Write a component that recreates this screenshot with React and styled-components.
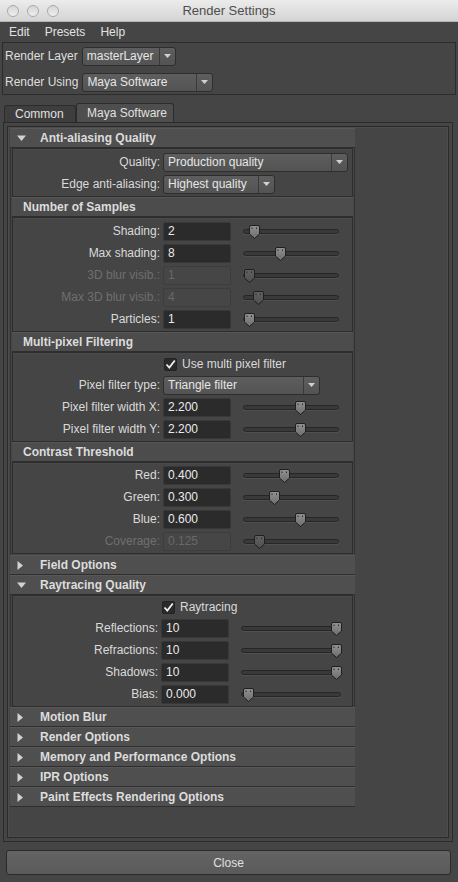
import React from "react";
import styled, { createGlobalStyle } from "styled-components";

const GlobalStyle = createGlobalStyle`
  * { box-sizing: border-box; }
  html, body {
    margin: 0;
    padding: 0;
    background: #454545;
  }
  body {
    font-family: "Liberation Sans", Arial, sans-serif;
    font-size: 12px;
    color: #d9d9d9;
  }
`;

const samples = [
  { label: "Shading:", value: "2", pos: 10 },
  { label: "Max shading:", value: "8", pos: 36 },
  { label: "3D blur visib.:", value: "1", pos: 5, disabled: true },
  { label: "Max 3D blur visib.:", value: "4", pos: 14, disabled: true },
  { label: "Particles:", value: "1", pos: 5 },
];

const filterWidths = [
  { label: "Pixel filter width X:", value: "2.200", pos: 56 },
  { label: "Pixel filter width Y:", value: "2.200", pos: 56 },
];

const contrast = [
  { label: "Red:", value: "0.400", pos: 40 },
  { label: "Green:", value: "0.300", pos: 30 },
  { label: "Blue:", value: "0.600", pos: 56 },
  { label: "Coverage:", value: "0.125", pos: 15, disabled: true },
];

const raytracing = [
  { label: "Reflections:", value: "10", pos: 94 },
  { label: "Refractions:", value: "10", pos: 94 },
  { label: "Shadows:", value: "10", pos: 94 },
  { label: "Bias:", value: "0.000", pos: 6 },
];

const closedSections = [
  "Motion Blur",
  "Render Options",
  "Memory and Performance Options",
  "IPR Options",
  "Paint Effects Rendering Options",
];

const Tri = ({ open }) =>
  open ? (
    <svg width="9" height="6" viewBox="0 0 9 6">
      <path d="M0 0.5H9L4.5 6Z" fill="#d2d2d2" />
    </svg>
  ) : (
    <svg width="6" height="9" viewBox="0 0 6 9">
      <path d="M0.5 0L6 4.5L0.5 9Z" fill="#d2d2d2" />
    </svg>
  );

const Arrow = () => (
  <svg width="7" height="4" viewBox="0 0 7 4">
    <path d="M0 0H7L3.5 4Z" fill="#d0d0d0" />
  </svg>
);

const Thumb = ({ disabled }) => (
  <svg width="11" height="14" viewBox="0 0 11 14">
    <defs>
      <linearGradient id={disabled ? "thd" : "th"} x1="0" y1="0" x2="0" y2="1">
        <stop offset="0" stopColor={disabled ? "#626262" : "#929292"} />
        <stop offset="1" stopColor={disabled ? "#4e4e4e" : "#6c6c6c"} />
      </linearGradient>
    </defs>
    <path
      d="M2 0.5H9Q10.5 0.5 10.5 2V9L5.5 13.5L0.5 9V2Q0.5 0.5 2 0.5Z"
      fill={`url(#${disabled ? "thd" : "th"})`}
      stroke="#1f1f1f"
    />
    <path d="M3 2.5V4M7.5 2.5V4" stroke="#2a2a2a" strokeWidth="1" />
  </svg>
);

const Check = () => (
  <svg width="11" height="11" viewBox="0 0 11 11">
    <path d="M1.5 5.5L4.3 8.5L9.8 1.5" fill="none" stroke="#f0f0f0" strokeWidth="1.8" />
  </svg>
);

const Dropdown = ({ text, width }) => (
  <Select $w={width}>
    <span>{text}</span>
    <SelectArrow>
      <Arrow />
    </SelectArrow>
  </Select>
);

const Slider = ({ pos, width, disabled }) => (
  <Track $w={width}>
    <ThumbBox style={{ left: pos - 5 }}>
      <Thumb disabled={disabled} />
    </ThumbBox>
  </Track>
);

const FieldRow = ({ label, value, pos, disabled, $ray }) => (
  <Row>
    <Label $w={$ray ? 148 : 150} $disabled={disabled}>
      {label}
    </Label>
    <Field $disabled={disabled}>{value}</Field>
    <SliderSlot>
      <Slider pos={pos} width={$ray ? 100 : 96} disabled={disabled} />
    </SliderSlot>
  </Row>
);

const App = () => {
  return (
    <Window>
      <GlobalStyle />
      <TitleBar>
        <Lights>
          <Light />
          <Light />
          <Light />
        </Lights>
        <Title>Render Settings</Title>
        <span />
      </TitleBar>

      <MenuBar>
        <span>Edit</span>
        <span>Presets</span>
        <span>Help</span>
      </MenuBar>

      <TopPanel>
        <TopRow>
          <span>Render Layer</span>
          <Dropdown text="masterLayer" width={94} />
        </TopRow>
        <TopRow>
          <span>Render Using</span>
          <Dropdown text="Maya Software" width={131} />
        </TopRow>
      </TopPanel>

      <Tabs>
        <Tab>Common</Tab>
        <Tab $active>Maya Software</Tab>
      </Tabs>

      <TabPanel>
        <Frame>
          <Sections>
            <Header>
              <TriBox>
                <Tri open />
              </TriBox>
              Anti-aliasing Quality
            </Header>
            <Body>
              <SubFrame $pad={2}>
                <Row>
                  <Label $w={150}>Quality:</Label>
                  <Dropdown text="Production quality" width={185} />
                </Row>
                <Row>
                  <Label $w={150}>Edge anti-aliasing:</Label>
                  <Dropdown text="Highest quality" width={112} />
                </Row>
              </SubFrame>

              <SubHeader>Number of Samples</SubHeader>
              <SubFrame $pad={2}>
                {samples.map((s) => (
                  <FieldRow key={s.label} {...s} />
                ))}
              </SubFrame>

              <SubHeader>Multi-pixel Filtering</SubHeader>
              <SubFrame>
                <CheckRow $offset={151}>
                  <Box>
                    <Check />
                  </Box>
                  Use multi pixel filter
                </CheckRow>
                <Row>
                  <Label $w={150}>Pixel filter type:</Label>
                  <Dropdown text="Triangle filter" width={157} />
                </Row>
                {filterWidths.map((s) => (
                  <FieldRow key={s.label} {...s} />
                ))}
              </SubFrame>

              <SubHeader>Contrast Threshold</SubHeader>
              <SubFrame>
                {contrast.map((s) => (
                  <FieldRow key={s.label} {...s} />
                ))}
              </SubFrame>
            </Body>

            <Header>
              <TriBox>
                <Tri />
              </TriBox>
              Field Options
            </Header>

            <Header>
              <TriBox>
                <Tri open />
              </TriBox>
              Raytracing Quality
            </Header>
            <Body $tight>
              <SubFrame>
                <CheckRow $offset={149}>
                  <Box>
                    <Check />
                  </Box>
                  Raytracing
                </CheckRow>
                {raytracing.map((s) => (
                  <FieldRow key={s.label} {...s} $ray />
                ))}
              </SubFrame>
            </Body>

            {closedSections.map((name) => (
              <Header key={name}>
                <TriBox>
                  <Tri />
                </TriBox>
                {name}
              </Header>
            ))}
          </Sections>
        </Frame>
      </TabPanel>

      <Footer>
        <CloseButton>Close</CloseButton>
      </Footer>
    </Window>
  );
};

const Window = styled.div`
  width: 458px;
  height: 882px;
  display: flex;
  flex-direction: column;
  background: #454545;
  overflow: hidden;
`;

const TitleBar = styled.div`
  height: 22px;
  flex-shrink: 0;
  display: grid;
  grid-template-columns: 1fr auto 1fr;
  align-items: center;
  background: linear-gradient(#ececec, #d4d4d4);
  border-bottom: 1px solid #b4b4b4;
`;

const Lights = styled.div`
  display: flex;
  gap: 8px;
  padding-left: 7px;
`;

const Light = styled.div`
  width: 12px;
  height: 12px;
  border-radius: 50%;
  background: linear-gradient(#d6d6d6, #eeeeee);
  border: 1px solid #a9a9a9;
`;

const Title = styled.div`
  font-size: 13px;
  color: #4e4e4e;
`;

const MenuBar = styled.div`
  height: 20px;
  flex-shrink: 0;
  display: flex;
  align-items: center;
  gap: 15px;
  padding-left: 9px;
  color: #e2e2e2;
  font-size: 12px;
`;

const TopPanel = styled.div`
  margin: 0 2px;
  height: 53px;
  flex-shrink: 0;
  border: 1px solid #2b2b2b;
  padding: 4px 0 3px 2px;
  display: flex;
  flex-direction: column;
  gap: 8px;
`;

const TopRow = styled.div`
  display: flex;
  align-items: center;
  gap: 4px;
  height: 18px;
  color: #dedede;
`;

const Select = styled.div`
  width: ${({ $w }) => $w}px;
  height: 19px;
  display: flex;
  align-items: center;
  justify-content: space-between;
  border: 1px solid #2e2e2e;
  border-radius: 3px;
  background: linear-gradient(#5e5e5e, #535353);
  color: #e6e6e6;
  font-size: 12px;

  > span {
    padding-left: 4px;
    white-space: nowrap;
  }
`;

const SelectArrow = styled.div`
  width: 16px;
  height: 100%;
  display: flex;
  align-items: center;
  justify-content: center;
  border-left: 1px solid #3a3a3a;
`;

const Tabs = styled.div`
  display: flex;
  align-items: flex-end;
  height: 19px;
  margin: 8px 0 0 4px;
  flex-shrink: 0;
`;

const Tab = styled.div`
  height: ${({ $active }) => ($active ? 19 : 17)}px;
  width: ${({ $active }) => ($active ? 98 : 72)}px;
  padding-left: 10px;
  display: flex;
  align-items: center;
  color: #e0e0e0;
  font-size: 12px;
  background: ${({ $active }) => ($active ? "#4e4e4e" : "#3e3e3e")};
  border: 1px solid #2c2c2c;
  border-bottom: none;
  border-radius: 3px 3px 0 0;
`;

const TabPanel = styled.div`
  flex: 1;
  margin: 0 5px 0 3px;
  border: 1px solid #2b2b2b;
  padding: 3px;
  display: flex;
  background: #454545;
`;

const Frame = styled.div`
  flex: 1;
  border: 1px solid #2a2a2a;
  padding: 1px 0 0 2px;
  box-shadow: inset 0 0 0 1px #4c4c4c;
`;

const Sections = styled.div`
  width: 345px;
  display: flex;
  flex-direction: column;
`;

const Header = styled.div`
  height: 20px;
  display: flex;
  align-items: center;
  background: #4f4f4f;
  border-top: 1px solid #585858;
  border-bottom: 1px solid #2e2e2e;
  color: #dcdcdc;
  font-weight: bold;
  font-size: 12px;
`;

const TriBox = styled.div`
  width: 30px;
  padding-left: 7px;
  display: flex;
  align-items: center;
`;

const Body = styled.div`
  padding: 0 1px ${({ $tight }) => ($tight ? 0 : 1)}px 1px;
  border-left: 1px solid #333;
  border-right: 1px solid #333;
  display: flex;
  flex-direction: column;
`;

const SubHeader = styled.div`
  height: 20px;
  display: flex;
  align-items: center;
  padding-left: 11px;
  background: #4c4c4c;
  border-top: 1px solid #565656;
  border-bottom: 1px solid #2e2e2e;
  color: #dcdcdc;
  font-weight: bold;
  font-size: 12px;
`;

const SubFrame = styled.div`
  border: 1px solid #2d2d2d;
  padding: ${({ $pad }) => $pad || 1}px 0 1px;
  display: flex;
  flex-direction: column;
  box-shadow: inset 0 1px 0 #4a4a4a;
`;

const Row = styled.div`
  height: 22px;
  display: flex;
  align-items: center;
`;

const Label = styled.div`
  width: ${({ $w }) => $w}px;
  padding-right: 3px;
  text-align: right;
  white-space: nowrap;
  color: ${({ $disabled }) => ($disabled ? "#6f6f6f" : "#dadada")};
`;

const Field = styled.div`
  width: 68px;
  height: 19px;
  padding-left: 4px;
  display: flex;
  align-items: center;
  border-radius: 2px;
  background: ${({ $disabled }) => ($disabled ? "#464646" : "#2b2b2b")};
  border: 1px solid ${({ $disabled }) => ($disabled ? "#3d3d3d" : "#383838")};
  color: ${({ $disabled }) => ($disabled ? "#686868" : "#eaeaea")};
`;

const SliderSlot = styled.div`
  margin-left: 12px;
  display: flex;
  align-items: center;
`;

const Track = styled.div`
  position: relative;
  width: ${({ $w }) => $w}px;
  height: 5px;
  border: 1px solid #262626;
  border-radius: 3px;
  background: #393939;
  box-shadow: 0 1px 0 #505050;
`;

const ThumbBox = styled.div`
  position: absolute;
  top: -5px;
  display: flex;
`;

const CheckRow = styled.div`
  height: 20px;
  display: flex;
  align-items: center;
  gap: 5px;
  padding-left: ${({ $offset }) => $offset}px;
  color: #dadada;
`;

const Box = styled.div`
  width: 13px;
  height: 13px;
  border-radius: 2px;
  background: #2a2a2a;
  border: 1px solid #232323;
  display: flex;
  align-items: center;
  justify-content: center;
`;

const Footer = styled.div`
  height: 40px;
  flex-shrink: 0;
  padding: 8px 7px 7px 6px;
  display: flex;
`;

const CloseButton = styled.div`
  flex: 1;
  height: 25px;
  display: flex;
  align-items: center;
  justify-content: center;
  border: 1px solid #2a2a2a;
  border-radius: 3px;
  background: linear-gradient(#646464, #5a5a5a);
  color: #e0e0e0;
  font-size: 12px;
`;

export default App;
